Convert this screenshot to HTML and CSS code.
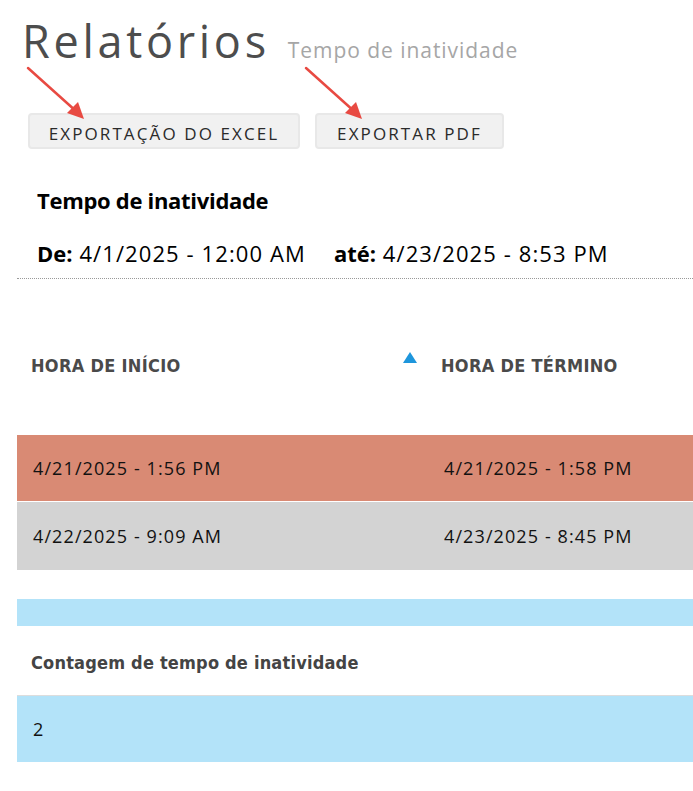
FILE: index.html
```html
<!DOCTYPE html>
<html lang="pt">
<head>
<meta charset="utf-8">
<link rel="stylesheet" href="styles.css">
</head>
<body>
<div class="page">
  <header class="title-row">
    <h1 class="title">Relatórios</h1>
    <span class="subtitle">Tempo de inatividade</span>
  </header>
  <div class="actions">
    <button class="btn btn-excel">EXPORTAÇÃO DO EXCEL</button>
    <button class="btn btn-pdf">EXPORTAR PDF</button>
    <svg class="arrow arrow-1" width="70" height="60" viewBox="0 0 70 60"><line x1="2" y1="2" x2="51" y2="46" stroke="#e84a42" stroke-width="2.5" stroke-linecap="round"/><polygon points="58,53 41,47 52,36" fill="#e84a42"/></svg>
    <svg class="arrow arrow-2" width="70" height="60" viewBox="0 0 70 60"><line x1="2" y1="2" x2="51" y2="46" stroke="#e84a42" stroke-width="2.5" stroke-linecap="round"/><polygon points="58,53 41,47 52,36" fill="#e84a42"/></svg>
  </div>
  <section class="report">
    <h2 class="report-title">Tempo de inatividade</h2>
    <p class="range"><b>De:</b> 4/1/2025 - 12:00 AM<span class="gap"></span><b>até:</b> 4/23/2025 - 8:53 PM</p>
  </section>
  <div class="table">
    <div class="thead">
      <div class="th th1">HORA DE INÍCIO</div>
      <div class="th th-sort"><span class="tri"></span>HORA DE TÉRMINO</div>
    </div>
    <div class="row row-red">
      <div class="td td1">4/21/2025 - 1:56 PM</div>
      <div class="td td2">4/21/2025 - 1:58 PM</div>
    </div>
    <div class="row row-gray">
      <div class="td td1">4/22/2025 - 9:09 AM</div>
      <div class="td td2">4/23/2025 - 8:45 PM</div>
    </div>
    <div class="blue-bar"></div>
    <div class="count-head">Contagem de tempo de inatividade</div>
    <div class="count-row">2</div>
  </div>
</div>
</body>
</html>
```
FILE: styles.css
```css
* { box-sizing: border-box; }
body {
  margin: 0;
  background: #fff;
  font-family: "Open Sans", "Noto Sans", sans-serif;
  color: #000;
  overflow: hidden;
}
.page { padding: 0 0 0 17px; width: 693px; }
.title-row {
  display: flex;
  align-items: baseline;
  padding: 13px 0 0 5px;
  height: 72px;
}
.title {
  margin: 0;
  font-weight: 400;
  font-size: 45px;
  line-height: 56px;
  color: #4d4d4d;
  letter-spacing: 3.7px;
}
.subtitle {
  margin-left: 18px;
  font-size: 21px;
  letter-spacing: 0.95px;
  color: #a6a6a6;
}
.actions {
  position: relative;
  display: flex;
  gap: 15px;
  padding: 41px 0 0 11px;
}
.btn {
  height: 36px;
  border: 2px solid #e8e8e8;
  border-radius: 4px;
  background: #f1f1f1;
  font-family: "Open Sans", sans-serif;
  font-size: 17px;
  letter-spacing: 2.1px;
  color: #2a2a2a;
  padding: 5px 0 0;
  text-align: center;
}
.btn-excel { width: 272px; }
.btn-pdf { width: 189px; }
.arrow { position: absolute; }
.arrow-1 { left: 9px; top: -6px; }
.arrow-2 { left: 287px; top: -6px; }
.report { padding: 37px 0 0 20px; }
.report-title {
  margin: 0;
  font-size: 22px;
  font-weight: 700;
  line-height: 28px;
  letter-spacing: -0.3px;
}
.range {
  margin: 25px 0 0;
  font-size: 22px;
  line-height: 28px;
  letter-spacing: 1.1px;
}
.range b { letter-spacing: 0; }
.range .gap { display: inline-block; width: 28px; }
.table {
  margin-top: 11px;
  border-top: 1px dotted #999;
  width: 680px;
}
.thead {
  display: flex;
  height: 156px;
  padding-top: 76px;
}
.th {
  font-family: "DejaVu Sans Condensed", sans-serif;
  font-weight: 700;
  font-size: 18px;
  letter-spacing: 0.3px;
  color: #4a4a4a;
}
.th1 { flex: none; width: 372px; padding-left: 14px; }
.th-sort { position: relative; padding-left: 52px; }
.tri {
  position: absolute;
  left: 14px;
  top: -3px;
  width: 0; height: 0;
  border-left: 7px solid transparent;
  border-right: 7px solid transparent;
  border-bottom: 11px solid #1e96dc;
}
.row {
  display: flex;
  align-items: center;
  font-size: 18px;
  letter-spacing: 1.1px;
  color: #111;
}
.row-red { background: #d98a74; border-bottom: 1px solid #fff; height: 67px; }
.row-gray { background: #d3d3d3; height: 68px; }
.td1 { flex: none; width: 427px; padding-left: 16px; }
.td2 { flex: 1; }
.blue-bar { margin-top: 29px; height: 27px; background: #b3e3f9; }
.count-head {
  font-family: "DejaVu Sans Condensed", sans-serif;
  font-weight: 700;
  font-size: 18px;
  letter-spacing: 0.2px;
  color: #444;
  padding: 26px 0 0 14px;
  height: 69px;
}
.count-row {
  border-top: 1px solid #ddd;
  background: #b3e3f9;
  height: 67px;
  display: flex;
  align-items: center;
  padding-left: 16px;
  font-size: 18px;
  color: #111;
}
```
